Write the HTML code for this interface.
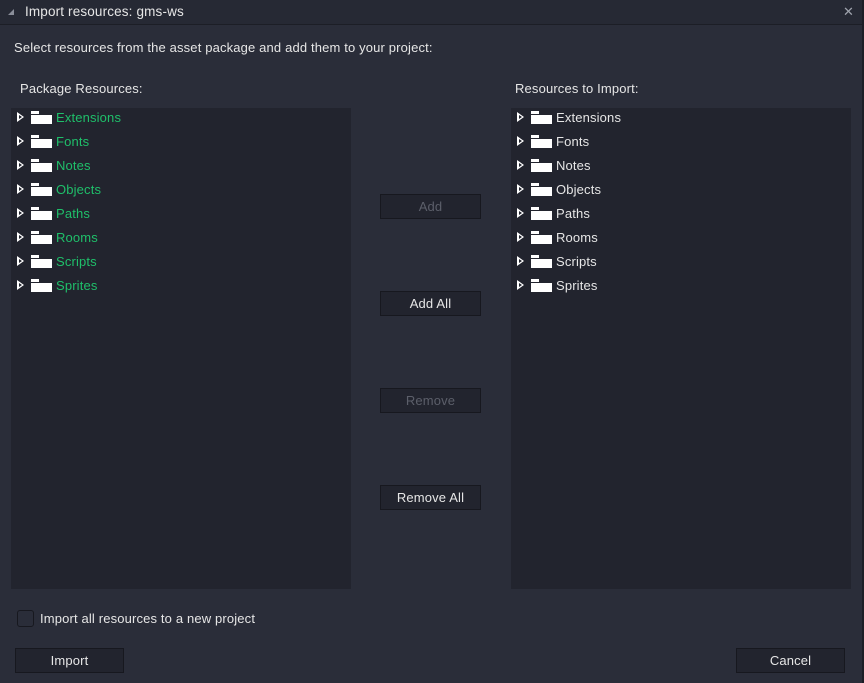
<!DOCTYPE html>
<html><head><style>
*{box-sizing:border-box;margin:0;padding:0}
body{width:864px;height:683px;background:#2a2d39;font-family:"Liberation Sans","DejaVu Sans",sans-serif;font-size:13px;letter-spacing:0.15px;color:#e6e6e6;position:relative;overflow:hidden}
.title{position:absolute;left:0;top:0;width:864px;height:25px;background:#262934;border-bottom:1px solid #1c1e26}
.title span{position:absolute;left:25px;top:4px;font-size:13.5px}
.tri{position:absolute;left:8px;top:9px;width:0;height:0;border-left:6px solid transparent;border-bottom:6px solid #8a8e99}
.x{position:absolute;left:843px;top:4px;color:#a0a4ae;font-size:13px;font-weight:bold}
.rb{position:absolute;right:0;top:0;width:2px;height:683px;background:#1c1e26}
.t{position:absolute;white-space:nowrap}
.panel{position:absolute;top:108px;width:340px;height:481px;background:#22242e}
.row{position:absolute;left:6px;height:20px;display:flex;align-items:center}
.arr{width:0;height:0;border-top:5px solid transparent;border-bottom:5px solid transparent;border-left:7px solid #fff;position:relative;margin-right:7px}
.arr:after{content:"";position:absolute;left:-5px;top:-2px;border-top:2px solid transparent;border-bottom:2px solid transparent;border-left:3px solid #22242e}
.fold{width:21px;height:12px;position:relative;margin-right:4px}
.fold:before{content:"";position:absolute;left:0;top:0;width:8px;height:3px;background:#fff}
.fold:after{content:"";position:absolute;left:0;top:3px;width:21px;height:9px;background:#fff;border-top:1px solid #22242e}
.g{color:#1fbf6a}
.btn{position:absolute;height:25px;background:#22242e;border:1px solid #17181f;text-align:center;line-height:23px;font-size:13px}
.dis{color:#5c5f6a}
.cb{position:absolute;left:17px;top:610px;width:17px;height:17px;border:1px solid #17181f;border-radius:3px;background:#2a2d39}
</style></head><body>
<div class="title"><div class="tri"></div><span>Import resources: gms-ws</span><div class="x">✕</div></div>
<div class="rb"></div>
<div class="t" style="left:14px;top:40px">Select resources from the asset package and add them to your project:</div>
<div class="t" style="left:20px;top:81px">Package Resources:</div>
<div class="t" style="left:515px;top:81px">Resources to Import:</div>
<div class="panel" style="left:11px">
<div class="row" style="top:-1px"><div class="arr"></div><div class="fold"></div><span class="g">Extensions</span></div>
<div class="row" style="top:23px"><div class="arr"></div><div class="fold"></div><span class="g">Fonts</span></div>
<div class="row" style="top:47px"><div class="arr"></div><div class="fold"></div><span class="g">Notes</span></div>
<div class="row" style="top:71px"><div class="arr"></div><div class="fold"></div><span class="g">Objects</span></div>
<div class="row" style="top:95px"><div class="arr"></div><div class="fold"></div><span class="g">Paths</span></div>
<div class="row" style="top:119px"><div class="arr"></div><div class="fold"></div><span class="g">Rooms</span></div>
<div class="row" style="top:143px"><div class="arr"></div><div class="fold"></div><span class="g">Scripts</span></div>
<div class="row" style="top:167px"><div class="arr"></div><div class="fold"></div><span class="g">Sprites</span></div>
</div>
<div class="panel" style="left:511px">
<div class="row" style="top:-1px"><div class="arr"></div><div class="fold"></div><span>Extensions</span></div>
<div class="row" style="top:23px"><div class="arr"></div><div class="fold"></div><span>Fonts</span></div>
<div class="row" style="top:47px"><div class="arr"></div><div class="fold"></div><span>Notes</span></div>
<div class="row" style="top:71px"><div class="arr"></div><div class="fold"></div><span>Objects</span></div>
<div class="row" style="top:95px"><div class="arr"></div><div class="fold"></div><span>Paths</span></div>
<div class="row" style="top:119px"><div class="arr"></div><div class="fold"></div><span>Rooms</span></div>
<div class="row" style="top:143px"><div class="arr"></div><div class="fold"></div><span>Scripts</span></div>
<div class="row" style="top:167px"><div class="arr"></div><div class="fold"></div><span>Sprites</span></div>
</div>
<div class="btn dis" style="left:380px;top:194px;width:101px">Add</div>
<div class="btn" style="left:380px;top:291px;width:101px">Add All</div>
<div class="btn dis" style="left:380px;top:388px;width:101px">Remove</div>
<div class="btn" style="left:380px;top:485px;width:101px">Remove All</div>
<div class="cb"></div>
<div class="t" style="left:40px;top:611px">Import all resources to a new project</div>
<div class="btn" style="left:15px;top:648px;width:109px">Import</div>
<div class="btn" style="left:736px;top:648px;width:109px">Cancel</div>
</body></html>
